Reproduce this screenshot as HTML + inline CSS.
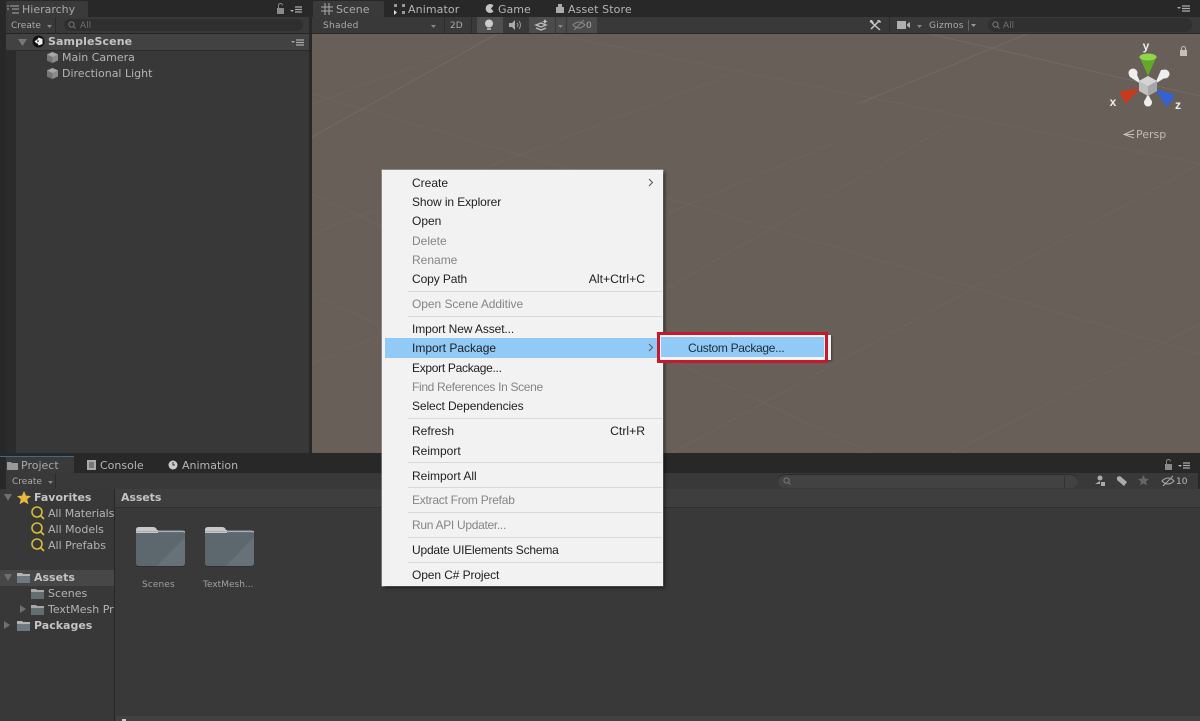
<!DOCTYPE html>
<html><head><meta charset="utf-8"><style>
html,body{margin:0;padding:0}
body{width:1200px;height:721px;overflow:hidden;position:relative;background:#282828;font-family:"DejaVu Sans","Liberation Sans",sans-serif;font-size:11px;color:#b4b4b4}
#r{position:absolute;left:0;top:0;width:1200px;height:721px;overflow:hidden;filter:blur(.35px)}
div,span{position:absolute;white-space:nowrap}
svg{position:absolute;overflow:visible}
.t{line-height:14px;height:14px}
.b{font-weight:bold;color:#c4c4c4}
.s{font-size:9px;color:#aaa}
.m{left:412px;font:12px/16px "Liberation Sans",sans-serif;color:#1e1e1e;height:16px}
.d{color:#858585}
.sep{left:408px;width:254px;height:1px;background:#d8d8d8}
.k{font:12.2px/16px "Liberation Sans",sans-serif;color:#1e1e1e;right:555px}
</style></head><body><div id="r">

<!-- Hierarchy panel -->
<div style="left:0;top:0;width:312px;height:453px;background:#282828"></div>
<div style="left:6px;top:1px;width:82px;height:16px;background:#3a3a3a;border-radius:2px 2px 0 0"></div>
<svg style="left:7px;top:5px" width="13" height="9"><path d="M0 1h2M0 4h2M3 1h9M5 4h7M5 8h7" stroke="#aaa" stroke-width="1.1" fill="none"/></svg>
<div class="t" style="left:22px;top:3px;color:#a8a8a8">Hierarchy</div>
<svg style="left:277px;top:3px" width="30" height="11"><rect x="0" y="5" width="7" height="6" fill="#8a8a8a"/><path d="M1.500 5V2.500a2 2 0 0 1 4 0" stroke="#8a8a8a" fill="none"/><path d="M13 7h4l-2 2z" fill="#aaa"/><path d="M18 6h7M18 8.500h7M18 11h7" stroke="#aaa" stroke-width="1.300" transform="translate(0,-2)"/></svg>
<div style="left:6px;top:17px;width:303px;height:16px;background:#393939"></div>
<div class="s t" style="left:11px;top:19px">Create</div>
<svg style="left:47px;top:25px" width="6" height="4"><path d="M0 0h5L2.500 3z" fill="#888"/></svg>
<div style="left:55px;top:17px;width:1px;height:16px;background:#2c2c2c"></div>
<div style="left:64px;top:19px;width:239px;height:12px;background:#2f2f2f;border-radius:7px"></div>
<svg style="left:68px;top:21px" width="10" height="8"><circle cx="3.500" cy="3.500" r="2.600" stroke="#777" fill="none"/><path d="M5.500 5.500l2 2" stroke="#777"/></svg>
<div class="s t" style="left:80px;top:19px;color:#6f6f6f">All</div>
<div style="left:6px;top:33px;width:303px;height:1px;background:#242424"></div>
<div style="left:6px;top:34px;width:303px;height:16px;background:#424242"></div>
<div style="left:6px;top:50px;width:303px;height:1px;background:#2b2b2b"></div>
<div style="left:6px;top:51px;width:10px;height:402px;background:#2b2b2b"></div>
<div style="left:16px;top:51px;width:293px;height:402px;background:#383838"></div>
<svg style="left:18px;top:38px" width="10" height="9"><path d="M0 1h9L4.500 8z" fill="#777"/></svg>
<svg style="left:32px;top:35px" width="13" height="13"><circle cx="6.500" cy="6.500" r="6" fill="#111"/><path d="M6.500 2.500l4 1.500v5l-4 1.500-1-3 1.500-1.500-1.500-1.500z" fill="#eee"/><path d="M2.500 6.500l3-2.500v5z" fill="#eee"/></svg>
<div class="t b" style="left:48px;top:35px;letter-spacing:.1px">SampleScene</div>
<svg style="left:291px;top:39px" width="16" height="7"><path d="M0 2h4L2 4z" fill="#aaa"/><path d="M5 1h8M5 3.500h8M5 6h8" stroke="#aaa" stroke-width="1.200"/></svg>
<svg style="left:46px;top:51px" width="13" height="13"><path d="M6.500 1l5.500 2.500v6L6.500 12 1 9.500v-6z" fill="#8c8c8c"/><path d="M1 3.500L6.500 6 12 3.500 6.500 1z" fill="#a8a8a8"/><path d="M6.500 6v6L1 9.500v-6z" fill="#757575"/></svg>
<div class="t" style="left:62px;top:51px">Main Camera</div>
<svg style="left:46px;top:67px" width="13" height="13"><path d="M6.500 1l5.500 2.500v6L6.500 12 1 9.500v-6z" fill="#8c8c8c"/><path d="M1 3.500L6.500 6 12 3.500 6.500 1z" fill="#a8a8a8"/><path d="M6.500 6v6L1 9.500v-6z" fill="#757575"/></svg>
<div class="t" style="left:62px;top:67px">Directional Light</div>

<!-- Scene tabs -->
<div style="left:312px;top:0;width:888px;height:17px;background:#282828"></div>
<div style="left:313px;top:1px;width:71px;height:16px;background:#3a3a3a;border-radius:2px 2px 0 0"></div>
<svg style="left:321px;top:3px" width="12" height="12"><path d="M4 0v12M8 0v12M0 4h12M0 8h12" stroke="#aaa"/></svg>
<div class="t" style="left:336px;top:3px;color:#a8a8a8">Scene</div>
<svg style="left:394px;top:4px" width="11" height="11"><path d="M0 0h3v3H0zM8 0h3v3H8zM8 7h3v3H8z" fill="#999"/><path d="M0 6v5l3-2.500z" fill="#ddd"/></svg>
<div class="t" style="left:408px;top:3px;letter-spacing:.1px">Animator</div>
<svg style="left:484px;top:3px" width="11" height="11"><path d="M9.500 2.500a4.500 4.500 0 1 0 0 6L7 5.500z" fill="#c4c4c4"/></svg>
<div class="t" style="left:498px;top:3px">Game</div>
<svg style="left:555px;top:3px" width="10" height="11"><path d="M1 4h8v6H1zM3 1h4v3H3z" fill="#aaa"/></svg>
<div class="t" style="left:568px;top:3px;letter-spacing:.1px">Asset Store</div>
<svg style="left:1177px;top:5px" width="16" height="7"><path d="M0 2h4L2 4z" fill="#aaa"/><path d="M5 1h8M5 3.500h8M5 6h8" stroke="#aaa" stroke-width="1.200"/></svg>

<!-- Scene toolbar -->
<div style="left:312px;top:17px;width:888px;height:16px;background:#393939"></div>
<div style="left:312px;top:33px;width:888px;height:1px;background:#2a2a2a"></div>
<div class="s t" style="left:323px;top:19px;letter-spacing:.3px">Shaded</div>
<svg style="left:431px;top:25px" width="6" height="4"><path d="M0 0h5L2.500 3z" fill="#888"/></svg>
<div style="left:444px;top:17px;width:1px;height:16px;background:#2c2c2c"></div>
<div class="s t" style="left:450px;top:19px">2D</div>
<div style="left:471px;top:17px;width:1px;height:16px;background:#2c2c2c"></div>
<div style="left:477px;top:17px;width:26px;height:16px;background:#505050"></div>
<svg style="left:484px;top:19px" width="10" height="12"><circle cx="5" cy="4.500" r="4" fill="#ccc"/><rect x="3" y="9" width="4" height="2" fill="#aaa"/></svg>
<svg style="left:509px;top:20px" width="13" height="10"><path d="M0 3h3l3-3v10L3 7H0z" fill="#aaa"/><path d="M8 3q2 2 0 4M10 1q3 4 0 8" stroke="#999" fill="none"/></svg>
<div style="left:529px;top:17px;width:68px;height:16px;background:#4b4b4b"></div>
<svg style="left:535px;top:19px" width="14" height="12"><path d="M1 6l5-2 5 2-5 2zM1 9l5 2 5-2" fill="none" stroke="#bbb" stroke-width="1.400"/><path d="M10 0l1 2 2 .5-2 .5-1 2-1-2-2-.5 2-.5z" fill="#ccc"/></svg>
<div style="left:555px;top:17px;width:1px;height:16px;background:#3a3a3a"></div>
<svg style="left:558px;top:25px" width="6" height="4"><path d="M0 0h5L2.500 3z" fill="#888"/></svg>
<div style="left:566px;top:17px;width:1px;height:16px;background:#3a3a3a"></div>
<svg style="left:572px;top:20px" width="14" height="10"><path d="M1 5q6-6 12 0q-6 6-12 0z" fill="none" stroke="#888"/><path d="M2 10L12 0" stroke="#888"/></svg>
<div class="s t" style="left:586px;top:19px">0</div>
<svg style="left:869px;top:19px" width="13" height="12"><path d="M2 10L10 2M1 2l10 9" stroke="#c8c8c8" stroke-width="1.500"/><path d="M8 1.500a2.500 2.500 0 0 1 4 2L10 3.500z" fill="#c8c8c8"/><path d="M1 1h2l2 3-1 1z" fill="#c8c8c8"/></svg>
<div style="left:889px;top:17px;width:1px;height:16px;background:#2c2c2c"></div>
<svg style="left:897px;top:21px" width="13" height="8"><rect width="9" height="8" fill="#b0b0b0"/><path d="M10 3l3-2v6l-3-2z" fill="#b0b0b0"/></svg>
<svg style="left:917px;top:25px" width="6" height="4"><path d="M0 0h5L2.500 3z" fill="#888"/></svg>
<div class="s t" style="left:929px;top:19px;letter-spacing:.25px">Gizmos</div>
<div style="left:968px;top:20px;width:1px;height:11px;background:#666"></div>
<svg style="left:971px;top:24px" width="6" height="4"><path d="M0 0h5L2.500 3z" fill="#999"/></svg>
<div style="left:988px;top:18px;width:204px;height:14px;background:#303030;border-radius:7px"></div>
<svg style="left:992px;top:21px" width="10" height="8"><circle cx="3.500" cy="3.500" r="2.600" stroke="#777" fill="none"/><path d="M5.500 5.500l2 2" stroke="#777"/></svg>
<div class="s t" style="left:1003px;top:19px;color:#6f6f6f">All</div>

<!-- Scene view -->
<div style="left:312px;top:34px;width:888px;height:419px;background:#675f58;overflow:hidden"></div>
<svg style="left:312px;top:34px;overflow:hidden" width="888" height="419">
<g stroke="#6c645d" stroke-width="1" fill="none">
<path d="M0 70L190 0M0 200L420 40M0 330L520 110M70 419L640 90M360 419L888 130M640 419L888 290M0 60L888 320M0 160L560 419M240 0L888 130M0 260L340 419"/>
</g>
<g stroke="#736b63" stroke-width="1" fill="none"><path d="M548 69L715 0M618 0L888 62M0 103L185 0"/></g>
</svg>

<!-- Gizmo -->
<svg style="left:1100px;top:40px" width="90" height="80">
<path d="M40 18h16l-8 18z" fill="#62a82a"/><ellipse cx="48" cy="17" rx="8.500" ry="3.500" fill="#8fd648"/>
<path d="M41 44L30 37a4.500 4.500 0 0 1 5-7z" fill="#eee"/><circle cx="33" cy="33" r="4.500" fill="#eee"/>
<path d="M55 44l11-7a4.500 4.500 0 0 0-5-7z" fill="#eee"/><circle cx="65" cy="34" r="4.500" fill="#eee"/>
<path d="M48 54l-4 8h8z" fill="#eee"/><circle cx="48" cy="62.500" r="4" fill="#eee"/>
<path d="M40 48L19 52l7 12z" fill="#c83a1c"/>
<path d="M55 49l20 6-8 12z" fill="#3362d8"/>
<path d="M48 36l9 5v10l-9 5-9-5V41z" fill="#c0c0c0"/><path d="M48 46l9-5v10l-9 5z" fill="#a6a6a6"/><path d="M48 36l9 5-9 5-9-5z" fill="#d4d4d4"/>
<text x="46" y="10" text-anchor="middle" fill="#eee" font-size="12" font-weight="bold" font-family="Liberation Sans">y</text>
<text x="13" y="66" text-anchor="middle" fill="#eee" font-size="12" font-weight="bold" font-family="Liberation Sans">x</text>
<text x="78" y="69" text-anchor="middle" fill="#eee" font-size="12" font-weight="bold" font-family="Liberation Sans">z</text>
</svg>
<svg style="left:1180px;top:46px" width="8" height="10"><rect y="4" width="7" height="6" fill="#c4c0bc"/><path d="M1.500 4V2.500a2 2 0 0 1 4 0V4" stroke="#c4c0bc" fill="none"/></svg>
<svg style="left:1123px;top:130px" width="12" height="9"><path d="M11 0L1 4.500 11 8M11 4.500H1" stroke="#c4c0bc" fill="none"/></svg>
<div class="t" style="left:1136px;top:128px;color:#c0bcb6">Persp</div>

<!-- Project panel -->
<div style="left:0;top:453px;width:1200px;height:268px;background:#282828"></div>
<div style="left:6px;top:457px;width:68px;height:16px;background:#3a3a3a"></div>
<div style="left:0;top:456px;width:74px;height:1px;background:#3f6a8c"></div>
<svg style="left:7px;top:461px" width="11" height="9"><path d="M0 1h4l1 1h6v7H0z" fill="#999"/></svg>
<div class="t" style="left:21px;top:459px;color:#a8a8a8">Project</div>
<svg style="left:87px;top:460px" width="9" height="10"><rect width="9" height="10" fill="#aaa"/><path d="M2 3h5M2 5h5M2 7h5" stroke="#444"/></svg>
<div class="t" style="left:100px;top:459px">Console</div>
<svg style="left:168px;top:460px" width="10" height="10"><circle cx="5" cy="5" r="4.500" fill="#ccc"/><path d="M5 2v3h2" stroke="#333" fill="none"/></svg>
<div class="t" style="left:182px;top:459px">Animation</div>
<svg style="left:1165px;top:459px" width="30" height="11"><rect x="0" y="5" width="7" height="6" fill="#8a8a8a"/><path d="M1.500 5V2.500a2 2 0 0 1 4 0" stroke="#8a8a8a" fill="none"/><path d="M13 6h4l-2 2z" fill="#aaa"/><path d="M18 4h7M18 6.500h7M18 9h7" stroke="#aaa" stroke-width="1.300"/></svg>

<div style="left:6px;top:473px;width:1192px;height:16px;background:#393939"></div>
<div class="s t" style="left:12px;top:475px">Create</div>
<svg style="left:48px;top:481px" width="6" height="4"><path d="M0 0h5L2.500 3z" fill="#888"/></svg>
<div style="left:55px;top:473px;width:1px;height:16px;background:#2c2c2c"></div>
<div style="left:778px;top:474px;width:300px;height:14px;background:#424242;border-radius:7px;box-shadow:inset 0 1px 0 #2a2a2a"></div>
<div style="left:1064px;top:474px;width:1px;height:14px;background:#333"></div>
<svg style="left:783px;top:477px" width="10" height="9"><circle cx="3.500" cy="3.500" r="2.600" stroke="#777" fill="none"/><path d="M5.500 5.500l2 2" stroke="#777"/></svg>
<svg style="left:1094px;top:475px" width="12" height="12"><circle cx="6" cy="3" r="2.500" fill="#aaa"/><path d="M1 9l5-3v3zM7 7h4v4H7z" fill="#aaa"/></svg>
<svg style="left:1116px;top:475px" width="12" height="12"><path d="M1 2l3-1 7 6-3 4-7-6z" fill="#aaa"/></svg>
<svg style="left:1138px;top:475px" width="11" height="11"><path d="M5.500 0l1.600 3.600 3.900.4-3 2.500.9 3.900-3.400-2-3.400 2 .9-3.900-3-2.500 3.900-.4z" fill="#666"/></svg>
<svg style="left:1161px;top:476px" width="14" height="10"><path d="M1 5q6-6 12 0q-6 6-12 0z" fill="none" stroke="#aaa"/><path d="M2 10L12 0" stroke="#aaa"/></svg>
<div class="s t" style="left:1176px;top:475px;color:#bbb">10</div>

<!-- Project left -->
<div style="left:0;top:489px;width:114px;height:232px;background:#383838"></div>
<div style="left:114px;top:489px;width:1px;height:232px;background:#282828"></div>
<div style="left:115px;top:489px;width:1085px;height:232px;background:#393939"></div>
<div style="left:115px;top:489px;width:1085px;height:18px;background:#3e3e3e"></div>
<div style="left:115px;top:507px;width:1085px;height:1px;background:#2e2e2e"></div>
<div class="t b" style="left:121px;top:491px;letter-spacing:-.1px">Assets</div>

<svg style="left:4px;top:494px" width="9" height="8"><path d="M0 0h8L4 7z" fill="#6f6f6f"/></svg>
<svg style="left:17px;top:491px" width="14" height="14"><path d="M7 0l2 4.600 5 .5-3.800 3.200 1.200 5L7 10.700 2.600 13.300l1.200-5L0 5.100l5-.5z" fill="#e8b83a"/></svg>
<div class="t b" style="left:34px;top:491px">Favorites</div>
<svg style="left:31px;top:506px" width="14" height="14"><circle cx="6" cy="6" r="5" stroke="#d8b93c" stroke-width="1.600" fill="none"/><path d="M9.500 9.500l3.500 3.500" stroke="#d8b93c" stroke-width="1.800"/></svg>
<div class="t" style="left:48px;top:507px;letter-spacing:-.1px">All Materials</div>
<svg style="left:31px;top:522px" width="14" height="14"><circle cx="6" cy="6" r="5" stroke="#d8b93c" stroke-width="1.600" fill="none"/><path d="M9.500 9.500l3.500 3.500" stroke="#d8b93c" stroke-width="1.800"/></svg>
<div class="t" style="left:48px;top:523px">All Models</div>
<svg style="left:31px;top:538px" width="14" height="14"><circle cx="6" cy="6" r="5" stroke="#d8b93c" stroke-width="1.600" fill="none"/><path d="M9.500 9.500l3.500 3.500" stroke="#d8b93c" stroke-width="1.800"/></svg>
<div class="t" style="left:48px;top:539px">All Prefabs</div>

<div style="left:0;top:570px;width:114px;height:16px;background:#474747"></div>
<svg style="left:4px;top:574px" width="9" height="8"><path d="M0 0h8L4 7z" fill="#6f6f6f"/></svg>
<svg style="left:17px;top:572px" width="13" height="11"><path d="M0 1h5l1 1h7v9H0z" fill="#6f7a80"/><path d="M0 1h5l1 1h7v2H0z" fill="#b4b4b4"/></svg>
<div class="t b" style="left:34px;top:571px">Assets</div>
<svg style="left:31px;top:588px" width="13" height="11"><path d="M0 1h5l1 1h7v9H0z" fill="#636d72"/><path d="M0 1h5l1 1h7v2H0z" fill="#a8a8a8"/></svg>
<div class="t" style="left:48px;top:587px">Scenes</div>
<svg style="left:20px;top:605px" width="7" height="9"><path d="M0 0l6 4-6 4z" fill="#6f6f6f"/></svg>
<svg style="left:31px;top:604px" width="13" height="11"><path d="M0 1h5l1 1h7v9H0z" fill="#636d72"/><path d="M0 1h5l1 1h7v2H0z" fill="#a8a8a8"/></svg>
<div style="left:48px;top:603px;width:66px;height:14px;overflow:hidden;line-height:14px">TextMesh Pro</div>
<svg style="left:4px;top:621px" width="7" height="9"><path d="M0 0l6 4-6 4z" fill="#6f6f6f"/></svg>
<svg style="left:17px;top:620px" width="13" height="11"><path d="M0 1h5l1 1h7v9H0z" fill="#6f7a80"/><path d="M0 1h5l1 1h7v2H0z" fill="#b4b4b4"/></svg>
<div class="t b" style="left:34px;top:619px">Packages</div>

<!-- Folders -->
<svg style="left:135px;top:526px" width="51" height="43"><path d="M1 4q0-3 3-3h14q3 0 4 3h25q3 0 3 3v30q0 3-3 3H4q-3 0-3-3z" fill="#667278"/><path d="M1 4q0-3 3-3h14q3 0 4 3h1v3H1z" fill="#c8c8c8"/><path d="M1 5h49v2q0-1-3-1H1z" fill="#a8adb0"/><path d="M1 7h49v4L22 40H4q-3 0-3-3z" fill="#5c686e"/><path d="M1 37q0 3 3 3h43q3 0 3-3v1q0 3-3 3H4q-3 0-3-3z" fill="#2c3133"/></svg>
<div class="s t" style="left:142px;top:578px;color:#a0a0a0;letter-spacing:.1px">Scenes</div>
<svg style="left:204px;top:526px" width="51" height="43"><path d="M1 4q0-3 3-3h14q3 0 4 3h25q3 0 3 3v30q0 3-3 3H4q-3 0-3-3z" fill="#667278"/><path d="M1 4q0-3 3-3h14q3 0 4 3h1v3H1z" fill="#c8c8c8"/><path d="M1 5h49v2q0-1-3-1H1z" fill="#a8adb0"/><path d="M1 7h49v4L22 40H4q-3 0-3-3z" fill="#5c686e"/><path d="M1 37q0 3 3 3h43q3 0 3-3v1q0 3-3 3H4q-3 0-3-3z" fill="#2c3133"/></svg>
<div class="s t" style="left:203px;top:578px;color:#a0a0a0">TextMesh...</div>

<div style="left:116px;top:716px;width:1084px;height:5px;background:#414141"></div>
<div style="left:122px;top:719px;width:4px;height:2px;background:#ccc"></div>

<!-- Context menu -->
<div style="left:382px;top:170px;width:281px;height:416px;background:#f2f2f2;box-shadow:2px 2px 3px rgba(0,0,0,.5),0 0 0 .5px #bbb"></div>
<div style="left:385px;top:338px;width:277px;height:20px;background:#91c9f7"></div>
<div class="m" style="top:175px">Create</div>
<svg style="left:648px;top:178px" width="6" height="9"><path d="M1 1l3.500 3.500L1 8" stroke="#555" fill="none"/></svg>
<div class="m" style="top:194px;letter-spacing:-.1px">Show in Explorer</div>
<div class="m" style="top:213px">Open</div>
<div class="m d" style="top:233px">Delete</div>
<div class="m d" style="top:252px">Rename</div>
<div class="m" style="top:271px;letter-spacing:-.1px">Copy Path</div>
<div class="k" style="top:271px">Alt+Ctrl+C</div>
<div class="sep" style="top:291px"></div>
<div class="m d" style="top:296px;letter-spacing:-.05px">Open Scene Additive</div>
<div class="sep" style="top:316px"></div>
<div class="m" style="top:321px;letter-spacing:-.1px">Import New Asset...</div>
<div class="m" style="top:340px">Import Package</div>
<svg style="left:648px;top:343px" width="6" height="9"><path d="M1 1l3.500 3.500L1 8" stroke="#555" fill="none"/></svg>
<div class="m" style="top:360px;letter-spacing:-.3px">Export Package...</div>
<div class="m d" style="top:379px;letter-spacing:-.33px">Find References In Scene</div>
<div class="m" style="top:398px;letter-spacing:-.1px">Select Dependencies</div>
<div class="sep" style="top:418px"></div>
<div class="m" style="top:423px">Refresh</div>
<div class="k" style="top:423px">Ctrl+R</div>
<div class="m" style="top:443px">Reimport</div>
<div class="sep" style="top:462px"></div>
<div class="m" style="top:468px">Reimport All</div>
<div class="sep" style="top:487px"></div>
<div class="m d" style="top:492px;letter-spacing:-.25px">Extract From Prefab</div>
<div class="sep" style="top:512px"></div>
<div class="m d" style="top:517px;letter-spacing:-.3px">Run API Updater...</div>
<div class="sep" style="top:537px"></div>
<div class="m" style="top:542px;letter-spacing:-.2px">Update UIElements Schema</div>
<div class="sep" style="top:562px"></div>
<div class="m" style="top:567px;letter-spacing:-.1px">Open C# Project</div>

<!-- Submenu -->
<div style="left:660px;top:335px;width:171px;height:25px;background:#f2f2f2;box-shadow:1px 1px 2px rgba(0,0,0,.4)"></div>
<div style="left:657px;top:332px;width:171px;height:31px;box-sizing:border-box;background:#f4f4f4;border:3px solid #c8182c"></div>
<div style="left:661px;top:337px;width:163px;height:20px;background:#91c9f7"></div>
<div class="m" style="left:688px;top:340px;color:#1c2c3c;letter-spacing:-.3px">Custom Package...</div>

</div></body></html>
